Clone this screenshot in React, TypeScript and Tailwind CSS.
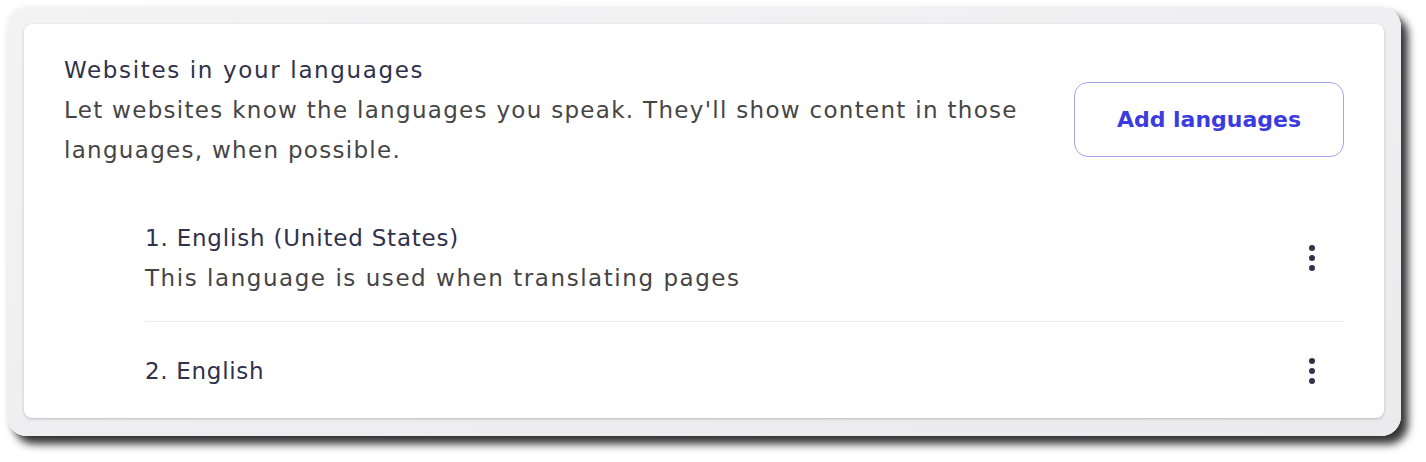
import React from "react";

function Kebab() {
  return (
    <button className="flex h-10 w-10 flex-col items-center justify-center gap-[4px]" aria-label="More actions">
      <span className="h-[6px] w-[6px] rounded-full bg-[#32334a]" />
      <span className="h-[6px] w-[6px] rounded-full bg-[#32334a]" />
      <span className="h-[6px] w-[6px] rounded-full bg-[#32334a]" />
    </button>
  );
}

export default function App() {
  return (
    <div className="min-h-[462px] w-[1426px] bg-white pl-[7px] pt-[7px]" style={{ fontFamily: "'DejaVu Sans', 'Noto Sans', sans-serif" }}>
      <div className="w-[1394px] rounded-[20px] bg-gradient-to-br from-[#f3f3f4] to-[#ebebed] p-[17px] pb-[18px] shadow-[7px_8px_9px_rgba(0,0,0,0.8),0_0_6px_rgba(0,0,0,0.06)]">
        <div className="rounded-lg bg-white px-10 pt-[25px] shadow-[0_1px_3px_rgba(0,0,0,0.22)]">
          <div className="flex items-start justify-between">
            <div className="w-[990px] tracking-[1.3px]">
              <div className="pt-[1px] text-[23px] leading-[40px] tracking-[1.65px] text-[#30314a]">Websites in your languages</div>
              <div className="text-[23px] leading-[40px] text-[#454545]">
                Let websites know the languages you speak. They'll show content in those languages, when possible.
              </div>
            </div>
            <button className="mt-[33px] flex h-[75px] w-[270px] items-center justify-center rounded-[14px] border-[1.5px] border-[#a3a3ef] text-[22px] font-bold text-[#3b3bdf]">
              Add languages
            </button>
          </div>
          <div className="ml-[81px] mt-[27px]">
            <div className="flex items-center justify-between border-b border-[#ececec] pb-[23px] pt-[21px]">
              <div>
                <div className="text-[23px] leading-[40px] tracking-[0.8px] text-[#30314a]">1. English (United States)</div>
                <div className="text-[23px] leading-[40px] tracking-[1.55px] text-[#444444]">This language is used when translating pages</div>
              </div>
              <div className="mr-[12px]">
                <Kebab />
              </div>
            </div>
            <div className="flex h-[96px] items-center justify-between pt-[1px]">
              <div className="text-[23px] leading-[40px] tracking-[0.7px] text-[#30314a]">2. English</div>
              <div className="mr-[12px]">
                <Kebab />
              </div>
            </div>
          </div>
        </div>
      </div>
    </div>
  );
}
